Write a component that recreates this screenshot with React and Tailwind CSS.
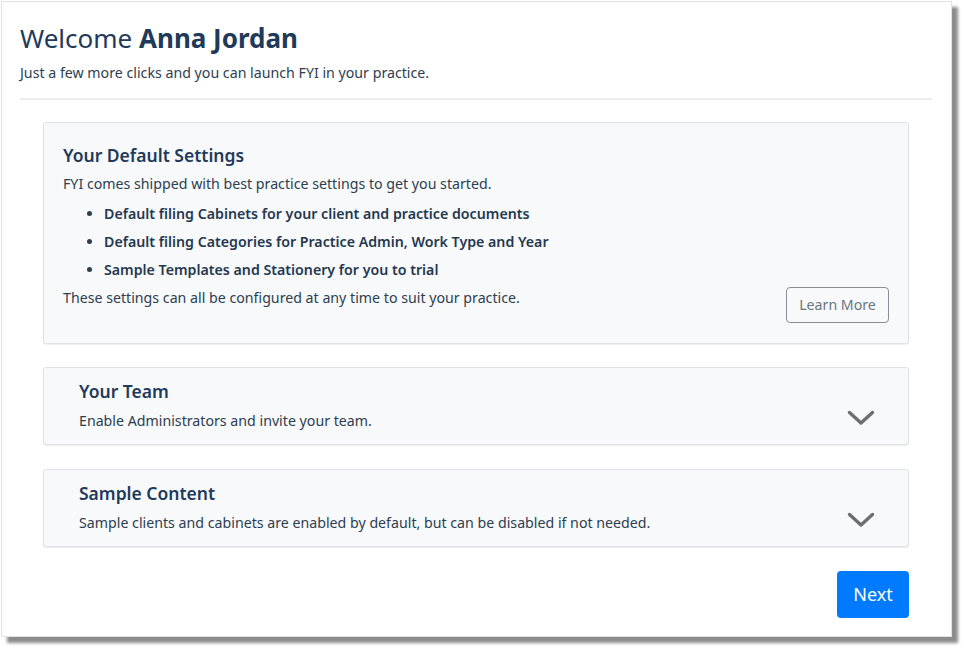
const defaults = [
  'Default filing Cabinets for your client and practice documents',
  'Default filing Categories for Practice Admin, Work Type and Year',
  'Sample Templates and Stationery for you to trial',
]

const sections = [
  { title: 'Your Team', desc: 'Enable Administrators and invite your team.' },
  { title: 'Sample Content', desc: 'Sample clients and cabinets are enabled by default, but can be disabled if not needed.' },
]

function Chevron() {
  return (
    <svg width="28" height="18" viewBox="0 0 28 18" fill="none" className="shrink-0">
      <path d="M2.5 3.5 L14 14 L25.5 3.5" stroke="#6e6e6e" strokeWidth="3.4" strokeLinecap="round" strokeLinejoin="round" />
    </svg>
  )
}

export default function App() {
  return (
    <div className="min-h-screen bg-white pt-px pl-px" style={{ fontFamily: '"Noto Sans", "Open Sans", sans-serif' }}>
      <div className="w-[951px] h-[636px] bg-white border border-[#e2e2e2] shadow-[6px_6px_3px_rgba(0,0,0,0.45)] flex flex-col">
        <div className="px-[18px] pt-[20px]">
          <h1 className="text-[26px] leading-[32px] text-[#1f3a5a]">
            Welcome <span className="font-bold">Anna Jordan</span>
          </h1>
          <p className="mt-[9px] text-[14.2px] leading-[20px] text-[#2c3e50]">
            Just a few more clicks and you can launch FYI in your practice.
          </p>
          <div className="mt-[15px] mr-[1px] h-[2px] bg-[#ececec]" />
        </div>

        <div className="ml-[41px] mr-[42px] mt-[22px] flex flex-col">
          <div className="bg-[#f8f9fa] border border-[#e0e2e5] rounded-[3px] pl-[19px] pr-[19px] pt-[20px] pb-[20px] shadow-[0_1px_1px_rgba(0,0,0,0.06)]">
            <h2 className="text-[17.5px] leading-[24px] font-semibold text-[#1f3a5a]">Your Default Settings</h2>
            <p className="mt-[7px] text-[14.2px] leading-[20px] text-[#2c3e50]">
              FYI comes shipped with best practice settings to get you started.
            </p>
            <ul className="mt-[6px] pl-[41px] list-disc marker:text-[#2c3e50]">
              {defaults.map(d => (
                <li key={d} className="text-[14.2px] leading-[28px] font-semibold text-[#24384f]">{d}</li>
              ))}
            </ul>
            <div className="mt-[3px] flex items-start justify-between">
              <p className="mt-px text-[14.2px] leading-[20px] text-[#2c3e50]">
                These settings can all be configured at any time to suit your practice.
              </p>
              <button className="w-[103px] h-[36px] border border-[#8a8f95] rounded-[4px] text-[14.2px] text-[#6c757d] bg-transparent">
                Learn More
              </button>
            </div>
          </div>

          {sections.map((s, i) => (
            <div
              key={s.title}
              className={`${i === 0 ? 'mt-[23px]' : 'mt-[24px]'} pb-[13px] bg-[#f8f9fa] border border-[#e0e2e5] rounded-[3px] pl-[35px] pr-[33px] pt-[11px] flex items-end justify-between shadow-[0_1px_1px_rgba(0,0,0,0.08)]`}
            >
              <div>
                <h3 className="text-[17.5px] leading-[24px] font-semibold text-[#1f3a5a]">{s.title}</h3>
                <p className="mt-[8px] text-[14.2px] leading-[20px] text-[#2c3e50]">{s.desc}</p>
              </div>
              <div className="mb-[4px]"><Chevron /></div>
            </div>
          ))}

          <div className="mt-[24px] flex justify-end">
            <button className="w-[72px] h-[47px] rounded-[4px] bg-[#007bff] text-white text-[18px]">Next</button>
          </div>
        </div>
      </div>
    </div>
  )
}
